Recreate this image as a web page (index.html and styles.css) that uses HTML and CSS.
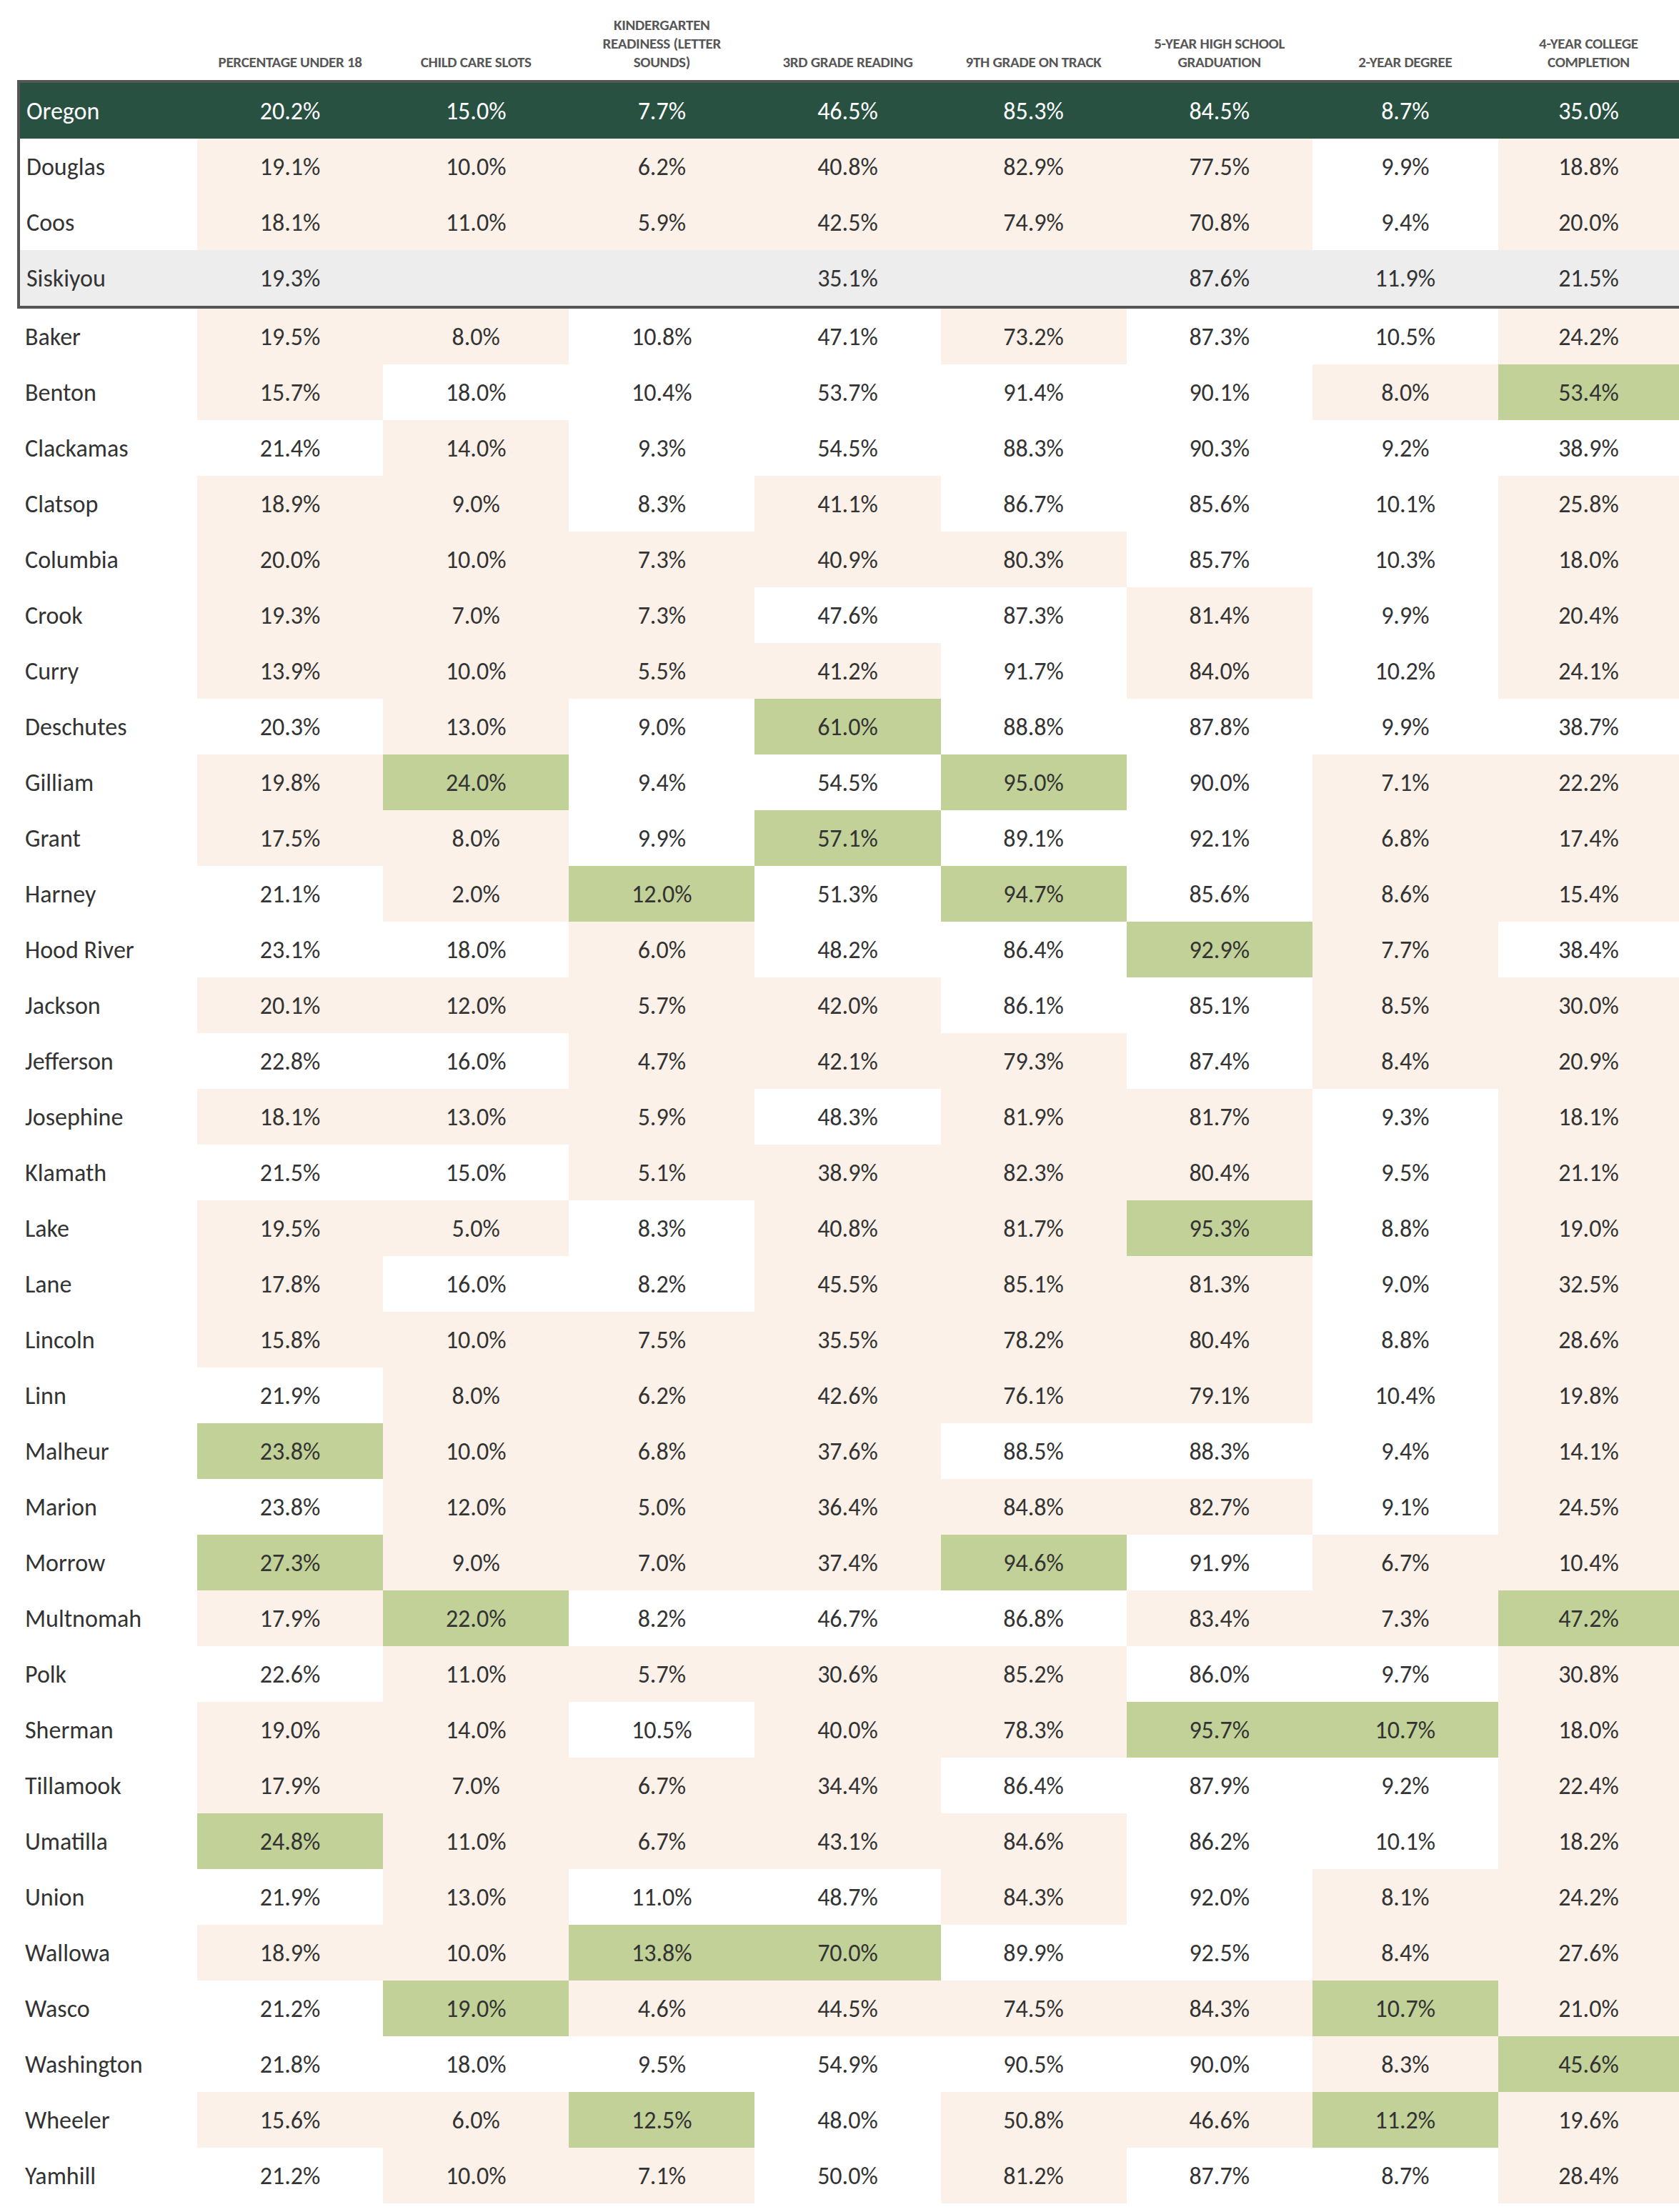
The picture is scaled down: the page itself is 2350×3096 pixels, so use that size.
FILE: index.html
```html
<!DOCTYPE html>
<html lang="en">
<head>
<meta charset="utf-8">
<title>Oregon County Indicators</title>
<link rel="stylesheet" href="styles.css">
</head>
<body>
<div class="page">
  <div class="row head">
    <div class="hc name"></div>
    <div class="hc">Percentage under 18</div>
    <div class="hc">Child care slots</div>
    <div class="hc">Kindergarten<br>readiness (letter<br>sounds)</div>
    <div class="hc">3rd grade reading</div>
    <div class="hc">9th grade on track</div>
    <div class="hc">5-year high school<br>graduation</div>
    <div class="hc">2-year degree</div>
    <div class="hc">4-year college<br>completion</div>
  </div>

  <div class="focus">
    <div class="row state">
      <div class="c name">Oregon</div><div class="c">20.2%</div><div class="c">15.0%</div><div class="c">7.7%</div><div class="c">46.5%</div><div class="c">85.3%</div><div class="c">84.5%</div><div class="c">8.7%</div><div class="c">35.0%</div>
    </div>
    <div class="row">
      <div class="c name">Douglas</div><div class="c t">19.1%</div><div class="c t">10.0%</div><div class="c t">6.2%</div><div class="c t">40.8%</div><div class="c t">82.9%</div><div class="c t">77.5%</div><div class="c">9.9%</div><div class="c t">18.8%</div>
    </div>
    <div class="row">
      <div class="c name">Coos</div><div class="c t">18.1%</div><div class="c t">11.0%</div><div class="c t">5.9%</div><div class="c t">42.5%</div><div class="c t">74.9%</div><div class="c t">70.8%</div><div class="c">9.4%</div><div class="c t">20.0%</div>
    </div>
    <div class="row grey">
      <div class="c name">Siskiyou</div><div class="c">19.3%</div><div class="c"></div><div class="c"></div><div class="c">35.1%</div><div class="c"></div><div class="c">87.6%</div><div class="c">11.9%</div><div class="c">21.5%</div>
    </div>
  </div>

  <div class="rest">
    <div class="row"><div class="c name">Baker</div><div class="c t">19.5%</div><div class="c t">8.0%</div><div class="c">10.8%</div><div class="c">47.1%</div><div class="c t">73.2%</div><div class="c">87.3%</div><div class="c">10.5%</div><div class="c t">24.2%</div></div>
    <div class="row"><div class="c name">Benton</div><div class="c t">15.7%</div><div class="c">18.0%</div><div class="c">10.4%</div><div class="c">53.7%</div><div class="c">91.4%</div><div class="c">90.1%</div><div class="c t">8.0%</div><div class="c g">53.4%</div></div>
    <div class="row"><div class="c name">Clackamas</div><div class="c">21.4%</div><div class="c t">14.0%</div><div class="c">9.3%</div><div class="c">54.5%</div><div class="c">88.3%</div><div class="c">90.3%</div><div class="c">9.2%</div><div class="c">38.9%</div></div>
    <div class="row"><div class="c name">Clatsop</div><div class="c t">18.9%</div><div class="c t">9.0%</div><div class="c">8.3%</div><div class="c t">41.1%</div><div class="c">86.7%</div><div class="c">85.6%</div><div class="c">10.1%</div><div class="c t">25.8%</div></div>
    <div class="row"><div class="c name">Columbia</div><div class="c t">20.0%</div><div class="c t">10.0%</div><div class="c t">7.3%</div><div class="c t">40.9%</div><div class="c t">80.3%</div><div class="c">85.7%</div><div class="c">10.3%</div><div class="c t">18.0%</div></div>
    <div class="row"><div class="c name">Crook</div><div class="c t">19.3%</div><div class="c t">7.0%</div><div class="c t">7.3%</div><div class="c">47.6%</div><div class="c">87.3%</div><div class="c t">81.4%</div><div class="c">9.9%</div><div class="c t">20.4%</div></div>
    <div class="row"><div class="c name">Curry</div><div class="c t">13.9%</div><div class="c t">10.0%</div><div class="c t">5.5%</div><div class="c t">41.2%</div><div class="c">91.7%</div><div class="c t">84.0%</div><div class="c">10.2%</div><div class="c t">24.1%</div></div>
    <div class="row"><div class="c name">Deschutes</div><div class="c">20.3%</div><div class="c t">13.0%</div><div class="c">9.0%</div><div class="c g">61.0%</div><div class="c">88.8%</div><div class="c">87.8%</div><div class="c">9.9%</div><div class="c">38.7%</div></div>
    <div class="row"><div class="c name">Gilliam</div><div class="c t">19.8%</div><div class="c g">24.0%</div><div class="c">9.4%</div><div class="c">54.5%</div><div class="c g">95.0%</div><div class="c">90.0%</div><div class="c t">7.1%</div><div class="c t">22.2%</div></div>
    <div class="row"><div class="c name">Grant</div><div class="c t">17.5%</div><div class="c t">8.0%</div><div class="c">9.9%</div><div class="c g">57.1%</div><div class="c">89.1%</div><div class="c">92.1%</div><div class="c t">6.8%</div><div class="c t">17.4%</div></div>
    <div class="row"><div class="c name">Harney</div><div class="c">21.1%</div><div class="c t">2.0%</div><div class="c g">12.0%</div><div class="c">51.3%</div><div class="c g">94.7%</div><div class="c">85.6%</div><div class="c t">8.6%</div><div class="c t">15.4%</div></div>
    <div class="row"><div class="c name">Hood River</div><div class="c">23.1%</div><div class="c">18.0%</div><div class="c t">6.0%</div><div class="c">48.2%</div><div class="c">86.4%</div><div class="c g">92.9%</div><div class="c t">7.7%</div><div class="c">38.4%</div></div>
    <div class="row"><div class="c name">Jackson</div><div class="c t">20.1%</div><div class="c t">12.0%</div><div class="c t">5.7%</div><div class="c t">42.0%</div><div class="c">86.1%</div><div class="c">85.1%</div><div class="c t">8.5%</div><div class="c t">30.0%</div></div>
    <div class="row"><div class="c name">Jefferson</div><div class="c">22.8%</div><div class="c">16.0%</div><div class="c t">4.7%</div><div class="c t">42.1%</div><div class="c t">79.3%</div><div class="c">87.4%</div><div class="c t">8.4%</div><div class="c t">20.9%</div></div>
    <div class="row"><div class="c name">Josephine</div><div class="c t">18.1%</div><div class="c t">13.0%</div><div class="c t">5.9%</div><div class="c">48.3%</div><div class="c t">81.9%</div><div class="c t">81.7%</div><div class="c">9.3%</div><div class="c t">18.1%</div></div>
    <div class="row"><div class="c name">Klamath</div><div class="c">21.5%</div><div class="c">15.0%</div><div class="c t">5.1%</div><div class="c t">38.9%</div><div class="c t">82.3%</div><div class="c t">80.4%</div><div class="c">9.5%</div><div class="c t">21.1%</div></div>
    <div class="row"><div class="c name">Lake</div><div class="c t">19.5%</div><div class="c t">5.0%</div><div class="c">8.3%</div><div class="c t">40.8%</div><div class="c t">81.7%</div><div class="c g">95.3%</div><div class="c">8.8%</div><div class="c t">19.0%</div></div>
    <div class="row"><div class="c name">Lane</div><div class="c t">17.8%</div><div class="c">16.0%</div><div class="c">8.2%</div><div class="c t">45.5%</div><div class="c t">85.1%</div><div class="c t">81.3%</div><div class="c">9.0%</div><div class="c t">32.5%</div></div>
    <div class="row"><div class="c name">Lincoln</div><div class="c t">15.8%</div><div class="c t">10.0%</div><div class="c t">7.5%</div><div class="c t">35.5%</div><div class="c t">78.2%</div><div class="c t">80.4%</div><div class="c">8.8%</div><div class="c t">28.6%</div></div>
    <div class="row"><div class="c name">Linn</div><div class="c">21.9%</div><div class="c t">8.0%</div><div class="c t">6.2%</div><div class="c t">42.6%</div><div class="c t">76.1%</div><div class="c t">79.1%</div><div class="c">10.4%</div><div class="c t">19.8%</div></div>
    <div class="row"><div class="c name">Malheur</div><div class="c g">23.8%</div><div class="c t">10.0%</div><div class="c t">6.8%</div><div class="c t">37.6%</div><div class="c">88.5%</div><div class="c">88.3%</div><div class="c">9.4%</div><div class="c t">14.1%</div></div>
    <div class="row"><div class="c name">Marion</div><div class="c">23.8%</div><div class="c t">12.0%</div><div class="c t">5.0%</div><div class="c t">36.4%</div><div class="c t">84.8%</div><div class="c t">82.7%</div><div class="c">9.1%</div><div class="c t">24.5%</div></div>
    <div class="row"><div class="c name">Morrow</div><div class="c g">27.3%</div><div class="c t">9.0%</div><div class="c t">7.0%</div><div class="c t">37.4%</div><div class="c g">94.6%</div><div class="c">91.9%</div><div class="c t">6.7%</div><div class="c t">10.4%</div></div>
    <div class="row"><div class="c name">Multnomah</div><div class="c t">17.9%</div><div class="c g">22.0%</div><div class="c">8.2%</div><div class="c">46.7%</div><div class="c">86.8%</div><div class="c t">83.4%</div><div class="c t">7.3%</div><div class="c g">47.2%</div></div>
    <div class="row"><div class="c name">Polk</div><div class="c">22.6%</div><div class="c t">11.0%</div><div class="c t">5.7%</div><div class="c t">30.6%</div><div class="c t">85.2%</div><div class="c">86.0%</div><div class="c">9.7%</div><div class="c t">30.8%</div></div>
    <div class="row"><div class="c name">Sherman</div><div class="c t">19.0%</div><div class="c t">14.0%</div><div class="c">10.5%</div><div class="c t">40.0%</div><div class="c t">78.3%</div><div class="c g">95.7%</div><div class="c g">10.7%</div><div class="c t">18.0%</div></div>
    <div class="row"><div class="c name">Tillamook</div><div class="c t">17.9%</div><div class="c t">7.0%</div><div class="c t">6.7%</div><div class="c t">34.4%</div><div class="c">86.4%</div><div class="c">87.9%</div><div class="c">9.2%</div><div class="c t">22.4%</div></div>
    <div class="row"><div class="c name">Umatilla</div><div class="c g">24.8%</div><div class="c t">11.0%</div><div class="c t">6.7%</div><div class="c t">43.1%</div><div class="c t">84.6%</div><div class="c">86.2%</div><div class="c">10.1%</div><div class="c t">18.2%</div></div>
    <div class="row"><div class="c name">Union</div><div class="c">21.9%</div><div class="c t">13.0%</div><div class="c">11.0%</div><div class="c">48.7%</div><div class="c t">84.3%</div><div class="c">92.0%</div><div class="c t">8.1%</div><div class="c t">24.2%</div></div>
    <div class="row"><div class="c name">Wallowa</div><div class="c t">18.9%</div><div class="c t">10.0%</div><div class="c g">13.8%</div><div class="c g">70.0%</div><div class="c">89.9%</div><div class="c">92.5%</div><div class="c t">8.4%</div><div class="c t">27.6%</div></div>
    <div class="row"><div class="c name">Wasco</div><div class="c">21.2%</div><div class="c g">19.0%</div><div class="c t">4.6%</div><div class="c t">44.5%</div><div class="c t">74.5%</div><div class="c t">84.3%</div><div class="c g">10.7%</div><div class="c t">21.0%</div></div>
    <div class="row"><div class="c name">Washington</div><div class="c">21.8%</div><div class="c">18.0%</div><div class="c">9.5%</div><div class="c">54.9%</div><div class="c">90.5%</div><div class="c">90.0%</div><div class="c t">8.3%</div><div class="c g">45.6%</div></div>
    <div class="row"><div class="c name">Wheeler</div><div class="c t">15.6%</div><div class="c t">6.0%</div><div class="c g">12.5%</div><div class="c">48.0%</div><div class="c t">50.8%</div><div class="c t">46.6%</div><div class="c g">11.2%</div><div class="c t">19.6%</div></div>
    <div class="row"><div class="c name">Yamhill</div><div class="c">21.2%</div><div class="c t">10.0%</div><div class="c t">7.1%</div><div class="c">50.0%</div><div class="c t">81.2%</div><div class="c">87.7%</div><div class="c">8.7%</div><div class="c t">28.4%</div></div>
  </div>
</div>
</body>
</html>
```

FILE: styles.css
```css
html, body {
  margin: 0;
  padding: 0;
  background: #ffffff;
}

body {
  font-family: "Carlito", "Lato", "Liberation Sans", sans-serif;
  color: #333333;
}

.page {
  width: 2350px;
  padding-left: 24px;
  box-sizing: border-box;
}

.row {
  display: grid;
  grid-template-columns: 252px repeat(7, 260.14px) 1fr;
}

.head {
  height: 112px;
}

.hc {
  align-self: end;
  padding-bottom: 12px;
  text-align: center;
  text-transform: uppercase;
  font-weight: 700;
  font-size: 21px;
  letter-spacing: -0.3px;
  line-height: 26px;
  color: #575757;
}

.focus {
  border-top: 4px solid #555555;
  border-bottom: 4px solid #555555;
  border-left: 4px solid #555555;
}

.focus .row {
  grid-template-columns: 248px repeat(7, 260.14px) 1fr;
}

.c {
  height: 78px;
  display: flex;
  align-items: center;
  justify-content: center;
  font-size: 34px;
}

.c.name {
  justify-content: flex-start;
  padding-left: 11px;
}

.focus .c.name {
  padding-left: 9px;
}

.t {
  background: #fbf1e8;
}

.g {
  background: #c1d198;
}

.state .c {
  background: #285142;
  color: #ffffff;
}

.grey .c {
  background: #ededed;
}
```
